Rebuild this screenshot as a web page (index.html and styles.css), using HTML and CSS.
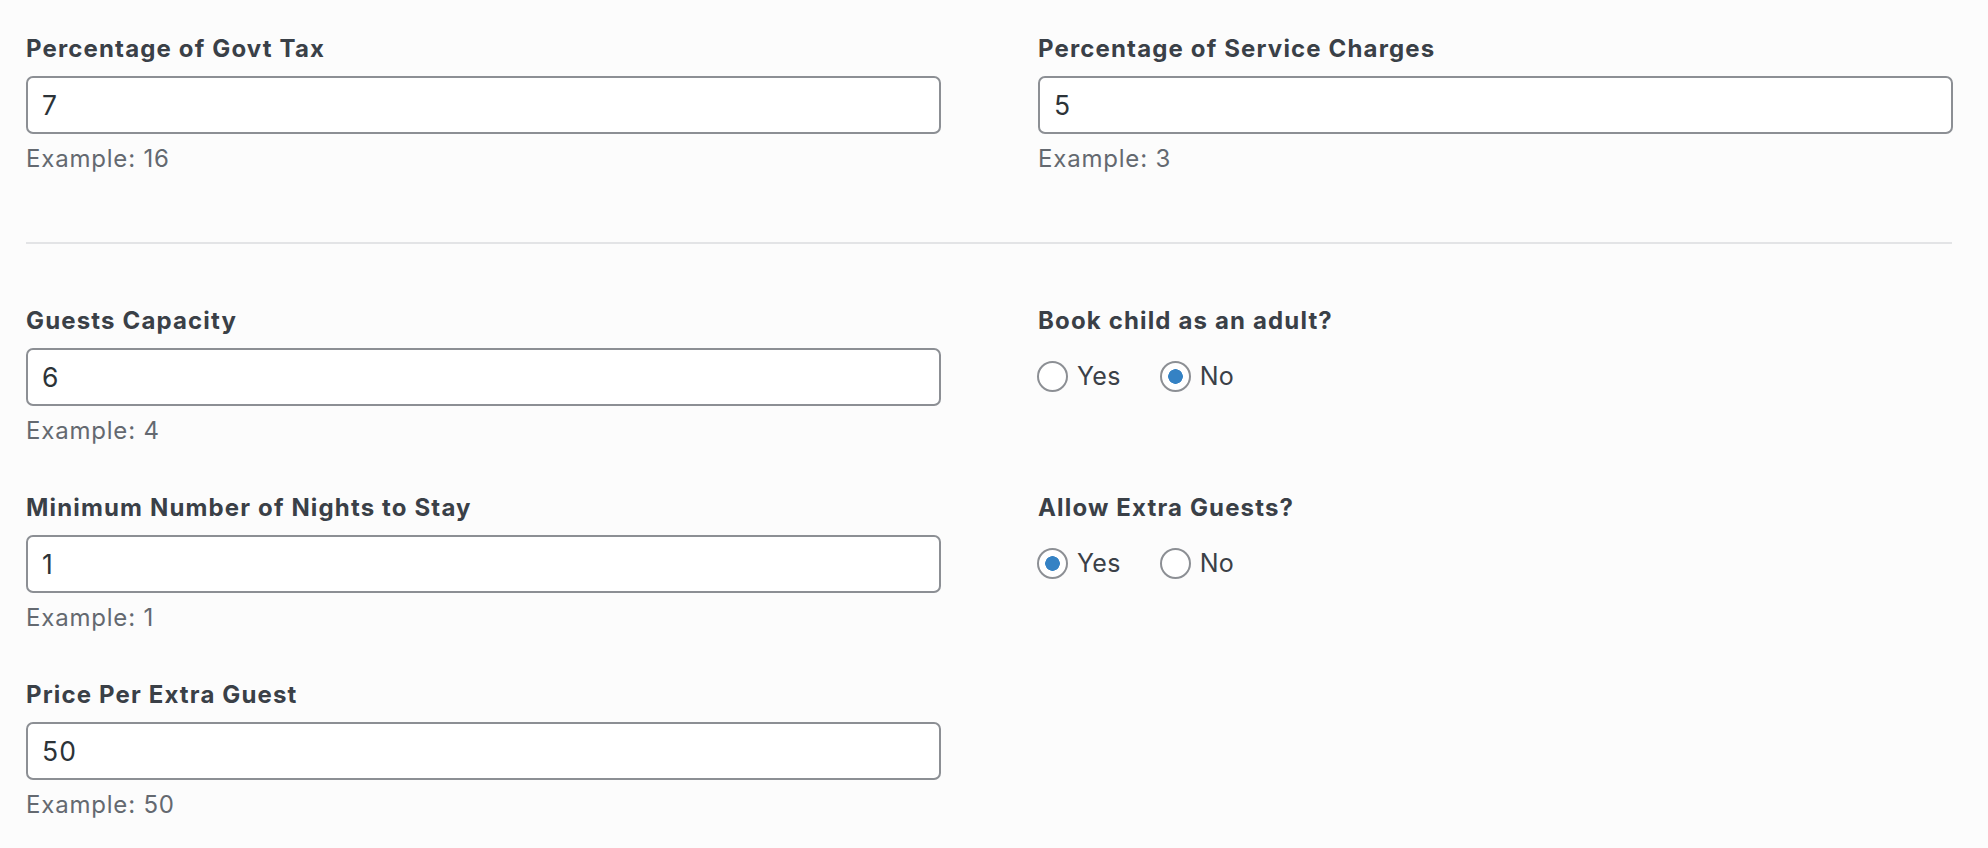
FILE: index.html
```html
<!DOCTYPE html>
<html lang="en">
<head>
<meta charset="utf-8">
<title>Room settings</title>
<link rel="stylesheet" href="styles.css">
</head>
<body>
<div class="page">
  <div class="grid">
    <div class="field">
      <label class="field-label" for="govt-tax">Percentage of Govt Tax</label>
      <input class="text-input" id="govt-tax" type="text" value="7">
      <p class="help">Example: 16</p>
    </div>
    <div class="field">
      <label class="field-label" for="service">Percentage of Service Charges</label>
      <input class="text-input" id="service" type="text" value="5">
      <p class="help">Example: 3</p>
    </div>
  </div>

  <hr class="divider">

  <div class="grid rows">
    <div class="field">
      <label class="field-label" for="capacity">Guests Capacity</label>
      <input class="text-input" id="capacity" type="text" value="6">
      <p class="help">Example: 4</p>
    </div>
    <div class="field">
      <span class="field-label">Book child as an adult?</span>
      <div class="radio-group">
        <label class="radio"><input type="radio" name="child_adult" value="yes"><span>Yes</span></label>
        <label class="radio"><input type="radio" name="child_adult" value="no" checked><span>No</span></label>
      </div>
    </div>
    <div class="field">
      <label class="field-label" for="nights">Minimum Number of Nights to Stay</label>
      <input class="text-input" id="nights" type="text" value="1">
      <p class="help">Example: 1</p>
    </div>
    <div class="field">
      <span class="field-label">Allow Extra Guests?</span>
      <div class="radio-group">
        <label class="radio"><input type="radio" name="extra" value="yes" checked><span>Yes</span></label>
        <label class="radio"><input type="radio" name="extra" value="no"><span>No</span></label>
      </div>
    </div>
    <div class="field">
      <label class="field-label" for="price">Price Per Extra Guest</label>
      <input class="text-input" id="price" type="text" value="50">
      <p class="help">Example: 50</p>
    </div>
    <div class="field"></div>
  </div>
</div>
</body>
</html>
```

FILE: styles.css
```css
html, body {
  margin: 0;
  padding: 0;
  background: #fcfcfc;
}

body {
  font-family: Inter, "Noto Sans", "Liberation Sans", sans-serif;
  color: #3c434a;
}

.page {
  padding: 34px 35px 0 26px;
}

.grid {
  display: grid;
  grid-template-columns: 1fr 1fr;
  column-gap: 97px;
  align-items: start;
}

.rows {
  row-gap: 47px;
}

.field {
  display: flex;
  flex-direction: column;
  align-items: stretch;
}

.field-label {
  display: block;
  font-size: 24px;
  line-height: 30px;
  font-weight: 700;
  letter-spacing: 1.15px;
  color: #3a4047;
  margin: 0 0 12px;
}

.text-input {
  box-sizing: border-box;
  height: 58px;
  width: 100%;
  margin: 0;
  padding: 0 14px;
  border: 2px solid #8c8f94;
  border-radius: 7px;
  background: #fff;
  font-family: Inter, "Noto Sans", "Liberation Sans", sans-serif;
  font-size: 26.5px;
  letter-spacing: 1.2px;
  color: #2c3338;
  outline: none;
}

.help {
  margin: 10px 0 0;
  font-size: 24px;
  line-height: 30px;
  letter-spacing: 0.8px;
  color: #646970;
}

.divider {
  border: 0;
  height: 2px;
  background: #e3e4e6;
  margin: 68px 1px 62px 0;
}

.radio-group {
  display: flex;
  align-items: center;
  gap: 39px;
  margin-top: 13px;
  margin-left: -1px;
}

.radio {
  display: flex;
  align-items: center;
  gap: 9px;
  font-size: 25px;
  line-height: 31px;
  letter-spacing: 0.3px;
  color: #3a4047;
}

.radio input {
  -webkit-appearance: none;
  appearance: none;
  box-sizing: border-box;
  width: 31px;
  height: 31px;
  margin: 0;
  border: 2px solid #8c8f94;
  border-radius: 50%;
  background: #fff;
}

.radio input:checked {
  background: radial-gradient(circle, #3582c4 0 7px, #fff 7.6px);
}
```
